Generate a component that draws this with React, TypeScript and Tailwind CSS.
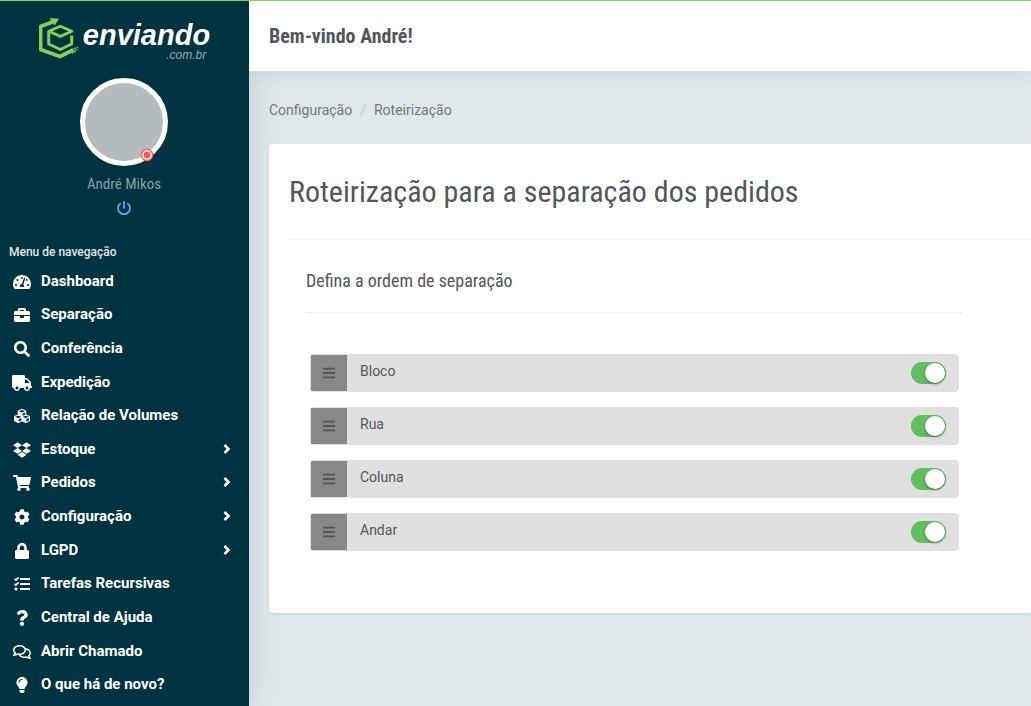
import React, { useState } from "react";
import {
  FaTachometerAlt,
  FaBriefcase,
  FaSearch,
  FaTruck,
  FaCubes,
  FaDropbox,
  FaShoppingCart,
  FaCog,
  FaLock,
  FaTasks,
  FaQuestion,
  FaRegComments,
  FaLightbulb,
  FaBars,
} from "react-icons/fa";
import type { IconType } from "react-icons";

interface MenuItem {
  label: string;
  icon: IconType;
  iconSize?: string;
  hasChildren?: boolean;
}

// wide glyphs need their own width to keep the same height as the others
const menuItems: MenuItem[] = [
  { label: "Dashboard", icon: FaTachometerAlt, iconSize: "size-[18px]" },
  { label: "Separação", icon: FaBriefcase },
  { label: "Conferência", icon: FaSearch },
  { label: "Expedição", icon: FaTruck, iconSize: "size-5" },
  { label: "Relação de Volumes", icon: FaCubes },
  { label: "Estoque", icon: FaDropbox, iconSize: "size-[18px]", hasChildren: true },
  { label: "Pedidos", icon: FaShoppingCart, iconSize: "size-[18px]", hasChildren: true },
  { label: "Configuração", icon: FaCog, hasChildren: true },
  { label: "LGPD", icon: FaLock, hasChildren: true },
  { label: "Tarefas Recursivas", icon: FaTasks },
  { label: "Central de Ajuda", icon: FaQuestion },
  { label: "Abrir Chamado", icon: FaRegComments, iconSize: "size-[18px]" },
  { label: "O que há de novo?", icon: FaLightbulb },
];

interface Level {
  id: string;
  label: string;
  enabled: boolean;
}

const initialLevels: Level[] = [
  { id: "bloco", label: "Bloco", enabled: true },
  { id: "rua", label: "Rua", enabled: true },
  { id: "coluna", label: "Coluna", enabled: true },
  { id: "andar", label: "Andar", enabled: true },
];

const Logo = () => (
  <a href="#" className="flex h-12 items-start justify-center text-white" aria-label="enviando.com.br">
    <svg viewBox="0 0 40 42" className="mt-px h-[42px] w-10 shrink-0" fill="none" stroke="#86cf5b">
      <path d="M13.5 4 1.500 8.500v23l19.500 7L34 32" strokeWidth="3.8" strokeLinejoin="round" />
      <path d="M10.500 0 20 .8l-4.500 6.800z" fill="#86cf5b" stroke="none" />
      <path d="M32.700 17.500v8.500L21.300 31.500 9.700 26V13.200" strokeWidth="3" strokeLinejoin="round" />
      <path d="M21.300 8.200 9.800 13.200l11.500 5.200 11.500-5.200z" strokeWidth="2.800" strokeLinejoin="round" />
      <path d="m33 31.500 6-2.200M33 33.500l5.500-2.200M33 35.300l4-1.800" strokeWidth="1.200" strokeDasharray="1.8 .6" />
    </svg>
    <span className="ml-1 flex flex-col items-end">
      <span className="font-['Liberation_Sans',Arial,sans-serif] text-[29px] leading-9 font-bold italic">enviando</span>
      <span className="-mt-1 mr-1 font-['Liberation_Sans',Arial,sans-serif] text-xs leading-3 text-[#9aa9af] italic">
        .com.br
      </span>
    </span>
  </a>
);

const PowerIcon = () => (
  <svg viewBox="0 0 14 14" className="size-[14px]" fill="none" stroke="currentColor" strokeWidth="1.8">
    <path d="M7 0v7.500M3.700 2.200a6 6 0 1 0 6.600 0" />
  </svg>
);

const ChevronIcon = () => (
  <svg viewBox="0 0 8 10" className="h-[10px] w-2" fill="none" stroke="currentColor" strokeWidth="2.6">
    <path d="m1.500 1 4 4-4 4" />
  </svg>
);

const Sidebar = () => (
  <aside className="z-10 w-[249px] shrink-0 bg-[#003340] pt-4 shadow-[0_0_28px_rgba(0,0,0,0.12)]">
    <Logo />

    <div className="mt-[13px] mr-px flex flex-col items-center">
      <div className="relative size-[88px] rounded-full border-[5px] border-white bg-[#b4bcbe]">
        <svg viewBox="0 0 14 14" className="absolute right-[9px] -bottom-px size-[14px]">
          <circle cx="7" cy="7" r="5.700" fill="#ffe3e3" stroke="#ff5652" strokeWidth="1.200" />
          <circle cx="7" cy="7" r="3.200" fill="#ff5652" />
        </svg>
      </div>
      <p className="mt-2 font-['Roboto_Condensed','Liberation_Sans_Narrow',Roboto,sans-serif] text-[15px] leading-5 text-[#8e9fa5]">
        André Mikos
      </p>
      <button type="button" aria-label="Sair" className="mt-[7px] text-[#64a7ea]">
        <PowerIcon />
      </button>
    </div>

    <nav className="mt-[29px]">
      <h2 className="px-[9px] text-xs leading-4 font-medium text-[#e2e8ea]">Menu de navegação</h2>
      <ul className="mt-1 grid h-[437px] auto-rows-fr">
        {menuItems.map(({ label, icon: Icon, iconSize = "size-4", hasChildren }) => (
          <li key={label}>
            <a href="#" className="flex h-full items-center pr-[18px] pl-3 text-[15px] leading-5 font-bold text-white">
              <span className="flex w-5 justify-center pt-0.5">
                <Icon className={`shrink-0 ${iconSize}`} />
              </span>
              <span className="ml-[9px] flex-1">{label}</span>
              {hasChildren && <ChevronIcon />}
            </a>
          </li>
        ))}
      </ul>
    </nav>
  </aside>
);

interface LevelRowProps {
  level: Level;
  onToggle: (id: string) => void;
}

const LevelRow: React.FC<LevelRowProps> = ({ level, onToggle }) => (
  <li className="flex h-[38px] items-center rounded border border-[#e0e0e0] bg-[#e0e0e0] pr-3">
    <button
      type="button"
      aria-label={`Mover ${level.label}`}
      className="flex size-9 cursor-move items-center justify-center bg-[#888] text-[#555]"
    >
      <FaBars className="size-[14px]" />
    </button>
    <label htmlFor={level.id} className="flex-1 pb-1 pl-[13px] text-sm leading-5">
      {level.label}
    </label>
    <input
      id={level.id}
      type="checkbox"
      role="switch"
      checked={level.enabled}
      onChange={() => onToggle(level.id)}
      className="flex h-[22px] w-[35px] cursor-pointer appearance-none items-center rounded-full bg-[#bbb] px-px before:size-5 before:rounded-full before:bg-white before:shadow-[0_1px_3px_rgba(0,0,0,0.4)] checked:justify-end checked:bg-[#64bd63]"
    />
  </li>
);

export default function App() {
  const [levels, setLevels] = useState(initialLevels);

  const toggleLevel = (id: string) => {
    setLevels((prev) => prev.map((l) => (l.id === id ? { ...l, enabled: !l.enabled } : l)));
  };

  return (
    <div className="flex min-h-screen overflow-hidden border-t border-[#86cf5b] bg-[#dfe7ea] font-[Roboto,sans-serif] text-[#545659]">
      <Sidebar />

      <div className="min-w-0 flex-1">
        <header className="relative z-20 flex h-[70px] items-center bg-white px-5 shadow-[0_4px_20px_-4px_rgba(0,0,0,0.1)]">
          <h1 className="font-['Roboto_Condensed','Liberation_Sans_Narrow',Roboto,sans-serif] text-xl leading-6 font-bold">
            Bem-vindo André!
          </h1>
        </header>

        <main className="pt-[29px] pl-5">
          <nav aria-label="Caminho" className="flex gap-2 text-sm leading-5 text-[#777]">
            <a href="#">Configuração</a>
            <span className="text-[#c4c9cb]">/</span>
            <a href="#">Roteirização</a>
          </nav>

          <section className="mt-6 rounded-l bg-white pt-7 pb-[62px] pl-5 shadow-[0_1px_2px_rgba(0,0,0,0.1)]">
            <h2 className="font-['Roboto_Condensed','Liberation_Sans_Narrow',Roboto,sans-serif] text-[30px] leading-10">
              Roteirização para a separação dos pedidos
            </h2>
            <hr className="mt-[27px] border-[#eee]" />

            <div className="mt-[27px] mr-[68px] ml-[17px]">
              <h3 className="font-['Roboto_Condensed','Liberation_Sans_Narrow',Roboto,sans-serif] text-lg leading-7">
                Defina a ordem de separação
              </h3>
              <hr className="mt-[17px] border-[#eee]" />
              <ul className="mx-1 mt-[41px] flex flex-col gap-[15px]">
                {levels.map((level) => (
                  <LevelRow key={level.id} level={level} onToggle={toggleLevel} />
                ))}
              </ul>
            </div>
          </section>
        </main>
      </div>
    </div>
  );
}
